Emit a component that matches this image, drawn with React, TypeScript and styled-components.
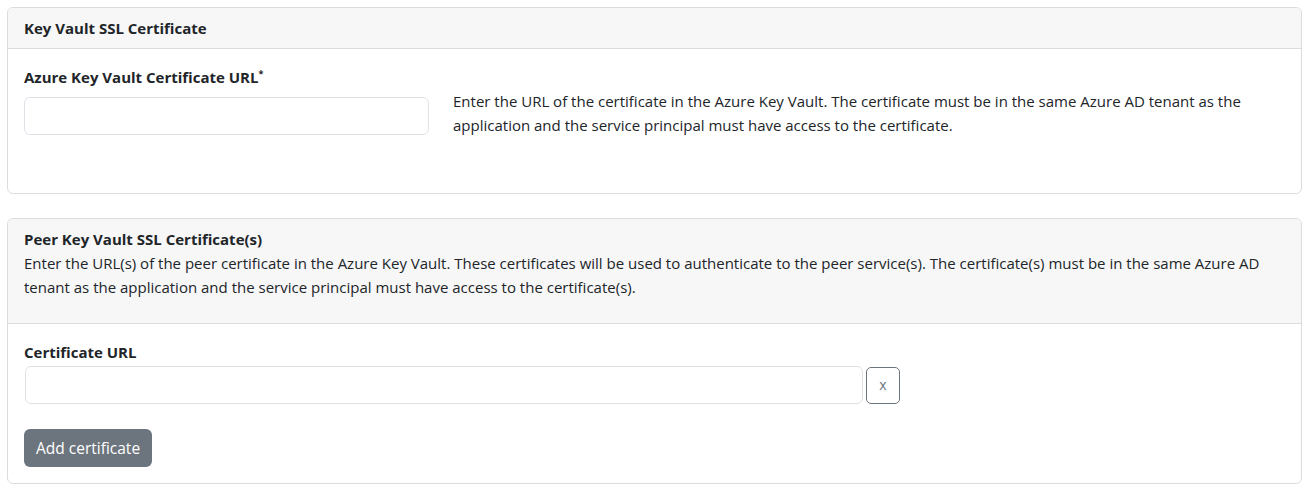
import React from "react";
import styled, { createGlobalStyle } from "styled-components";

const Global = createGlobalStyle`
  html, body { margin: 0; padding: 0; background: #fff; }
  body {
    font-family: "Open Sans", "Noto Sans", sans-serif;
    font-size: 15px;
    line-height: 24px;
    color: #212529;
  }
  * { box-sizing: border-box; }
`;

const Page = styled.div`
  padding: 7px 9px 0 7px;
  display: flex;
  flex-direction: column;
  gap: 24px;
`;

const Card = styled.section`
  border: 1px solid #dcdcdc;
  border-radius: 6px;
  background: #fff;
  overflow: hidden;
`;

const CardHeader = styled.header`
  background: #f7f7f7;
  border-bottom: 1px solid #dcdcdc;
  padding: 8px 16px;
`;

const HeaderTitle = styled.h3`
  margin: 0;
  font-size: 15px;
  font-weight: 700;
  line-height: 24px;
`;

const HeaderText = styled.p`
  margin: 0 0 16px;
`;

const CardBody = styled.div<{ $bottom?: number }>`
  padding: 16px 16px ${(p) => p.$bottom ?? 16}px;
`;

const FieldRow = styled.div`
  display: grid;
  grid-template-columns: 405px 1fr;
  column-gap: 24px;
`;

const Label = styled.label<{ $gap?: number }>`
  display: block;
  font-weight: 700;
  margin-bottom: ${(p) => p.$gap ?? 8}px;
  sup { font-size: 9px; line-height: 0; }
`;

const Input = styled.input`
  display: block;
  width: 100%;
  height: 38px;
  border: 1px solid #dee2e6;
  border-radius: 6px;
  padding: 6px 12px;
  font: inherit;
  background: #fff;
  outline: none;
`;

const Help = styled.p`
  margin: 24px 0 0;
`;

const InputLine = styled.div`
  display: flex;
  align-items: center;
  gap: 3px;
  padding-left: 1px;
  width: 876px;
`;

const RemoveButton = styled.button`
  flex: 0 0 34px;
  height: 37px;
  border: 1px solid #6c757d;
  border-radius: 5px;
  background: #fff;
  color: #6c757d;
  font-family: inherit;
  font-size: 14px;
  padding: 0 0 2px;
`;

const AddButton = styled.button`
  margin-top: 25px;
  height: 38px;
  padding: 0 12px;
  border: none;
  border-radius: 6px;
  background: #6c757d;
  color: #fff;
  font-family: inherit;
  font-size: 15.5px;
`;

export default function App() {
  return (
    <>
      <Global />
      <Page>
        <Card>
          <CardHeader>
            <HeaderTitle>Key Vault SSL Certificate</HeaderTitle>
          </CardHeader>
          <CardBody $bottom={56}>
            <FieldRow>
              <div>
                <Label>
                  Azure Key Vault Certificate URL<sup>*</sup>
                </Label>
                <Input />
              </div>
              <Help>
                Enter the URL of the certificate in the Azure Key Vault. The certificate must be in the same Azure AD tenant as the
                application and the service principal must have access to the certificate.
              </Help>
            </FieldRow>
          </CardBody>
        </Card>
        <Card>
          <CardHeader>
            <HeaderTitle>Peer Key Vault SSL Certificate(s)</HeaderTitle>
            <HeaderText>
              Enter the URL(s) of the peer certificate in the Azure Key Vault. These certificates will be used to authenticate to
              the peer service(s). The certificate(s) must be in the same Azure AD tenant as the application and the service
              principal must have access to the certificate(s).
            </HeaderText>
          </CardHeader>
          <CardBody>
            <Label $gap={2}>Certificate URL</Label>
            <InputLine>
              <Input />
              <RemoveButton>x</RemoveButton>
            </InputLine>
            <AddButton>Add certificate</AddButton>
          </CardBody>
        </Card>
      </Page>
    </>
  );
}
